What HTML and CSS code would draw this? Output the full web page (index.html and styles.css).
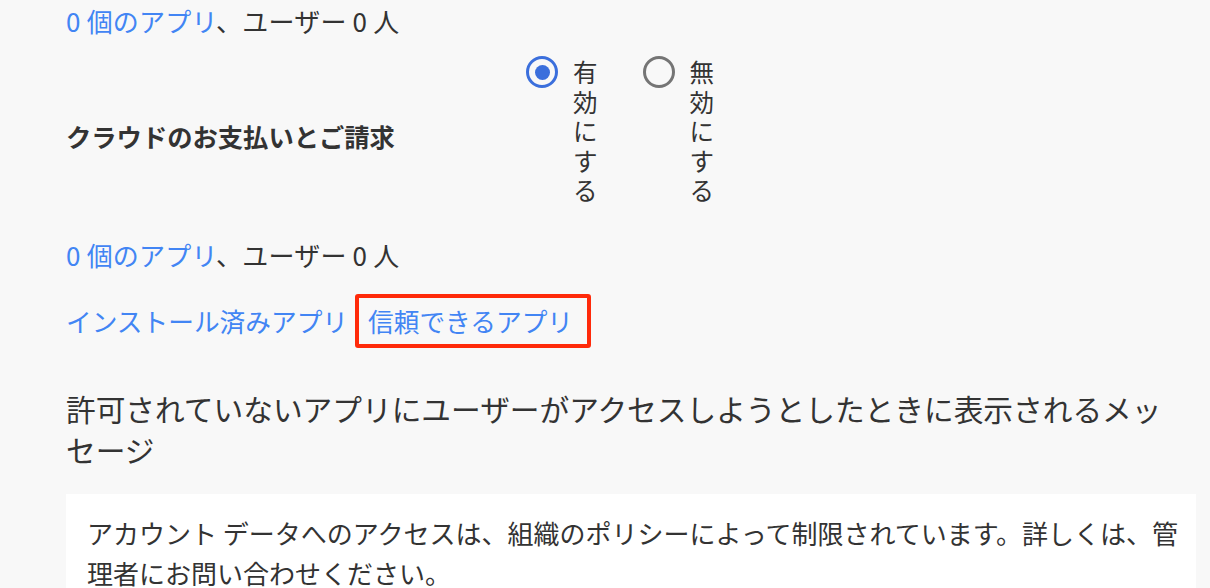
FILE: index.html
```html
<!DOCTYPE html>
<html lang="ja">
<head>
  <meta charset="UTF-8" />
  <meta name="viewport" content="width=device-width, initial-scale=1.0"/>
  <title>アプリのアクセス制御</title>
  <link rel="stylesheet" href="styles.css">
</head>
<body>
  <div class="contenido">

    <!-- resumen de la fila anterior -->
    <p class="resumen"><a href="#" class="enlace">0 個のアプリ</a>、ユーザー 0 人</p>

    <!-- fila de ajuste -->
    <div class="ajuste">
      <div class="ajuste-nombre">クラウドのお支払いとご請求</div>
      <div class="opciones">
        <label class="opcion">
          <span class="radio activo"></span>
          <span class="opcion-texto">有効にする</span>
        </label>
        <label class="opcion">
          <span class="radio"></span>
          <span class="opcion-texto">無効にする</span>
        </label>
      </div>
    </div>

    <p class="resumen resumen-2"><a href="#" class="enlace">0 個のアプリ</a>、ユーザー 0 人</p>

    <div class="pestanas">
      <a href="#" class="enlace">インストール済みアプリ</a>
      <a href="#" class="enlace marcado">信頼できるアプリ</a>
    </div>

    <h3 class="titulo-mensaje">許可されていないアプリにユーザーがアクセスしようとしたときに表示されるメッセージ</h3>

    <div class="caja-mensaje">
      アカウント データへのアクセスは、組織のポリシーによって制限されています。詳しくは、管理者にお問い合わせください。
    </div>

  </div>
</body>
</html>
```

FILE: styles.css
```css
* { margin: 0; padding: 0; box-sizing: border-box; }

body {
  font-family: "Noto Sans CJK JP", "Noto Sans", sans-serif;
  background: #f8f8f8;
  color: #333;
  height: 100vh;
  overflow: hidden;
}

.contenido {
  padding: 1px 14px 0 66px;
}

.enlace {
  color: #4285f4;
  text-decoration: none;
}

.resumen {
  font-size: 26px;
  line-height: 40px;
  letter-spacing: 0.2px;
}

.ajuste {
  display: flex;
  align-items: center;
  margin-top: 15px;
}

.ajuste-nombre {
  width: 460px;
  font-size: 25.3px;
  font-weight: bold;
  padding-top: 12px;
}

.opciones {
  display: flex;
  gap: 45px;
}

.opcion {
  display: flex;
  align-items: flex-start;
  gap: 15px;
}

.radio {
  width: 32px;
  height: 32px;
  border-radius: 50%;
  border: 3.5px solid #757575;
  display: flex;
  align-items: center;
  justify-content: center;
  flex-shrink: 0;
}

.radio.activo {
  border-color: #3b6fdc;
}

.radio.activo::after {
  content: "";
  width: 15px;
  height: 15px;
  border-radius: 50%;
  background: #3b6fdc;
}

.opcion-texto {
  width: 1em;
  font-size: 24.5px;
  line-height: 29.5px;
  margin-top: 1px;
}

.resumen-2 {
  margin-top: 30px;
}

.pestanas {
  display: flex;
  align-items: center;
  margin-top: 19px;
  font-size: 25.7px;
  line-height: 40px;
}

.marcado {
  margin-left: 7px;
  padding: 3px 14px 3px 9px;
  border: 4.5px solid #ff2a0a;
  border-radius: 3px;
}

.titulo-mensaje {
  font-size: 29.7px;
  font-weight: normal;
  line-height: 41px;
  color: #333;
  max-width: 1115px;
  margin-top: 40px;
}

.caja-mensaje {
  background: #fff;
  margin-top: 24px;
  padding: 19px 12px 20px 21px;
  font-size: 26px;
  line-height: 40px;
}
```
